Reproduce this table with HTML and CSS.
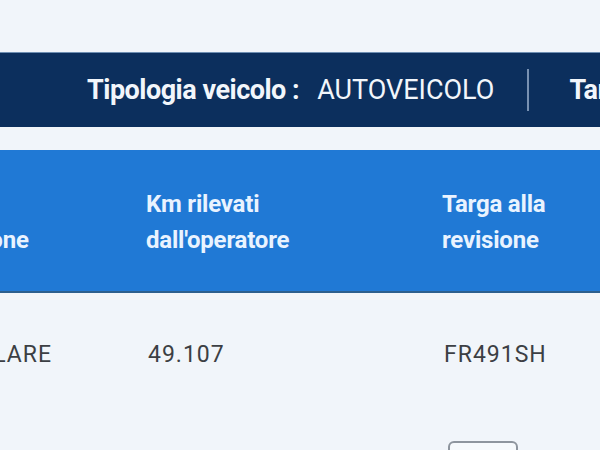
FILE: index.html
```html
<!DOCTYPE html>
<html lang="it">
<head>
<meta charset="utf-8">
<link rel="stylesheet" href="styles.css">
</head>
<body>
<div class="page">
  <div class="infobar">
    <span class="label">Tipologia veicolo :</span>
    <span class="value">AUTOVEICOLO</span>
    <span class="sep"></span>
    <span class="label">Targa :</span>
  </div>
  <div class="table">
    <div class="thead">
      <div class="th c1">Esito<br>revisione</div>
      <div class="th c2">Km rilevati<br>dall'operatore</div>
      <div class="th c3">Targa alla<br>revisione</div>
    </div>
    <div class="row">
      <div class="td c1">REGOLARE</div>
      <div class="td c2">49.107</div>
      <div class="td c3">FR491SH</div>
    </div>
    <div class="actions">
      <div class="c1"></div>
      <div class="c2"></div>
      <div class="c3"><span class="btn"></span></div>
    </div>
  </div>
</div>
</body>
</html>
```
FILE: styles.css
```css
html, body {
  margin: 0;
  padding: 0;
  width: 600px;
  height: 450px;
  overflow: hidden;
  background: #f1f5fa;
  font-family: Roboto, "Liberation Sans", sans-serif;
}
.page {
  padding-top: 52px;
}
.infobar {
  height: 74px;
  background: #0c2f5d;
  border-top: 1px solid #6f8fb3;
  display: flex;
  align-items: center;
  padding-left: 87px;
  white-space: nowrap;
  color: #f2f6fb;
  font-size: 27px;
  letter-spacing: -0.5px;
}
.infobar > span {
  flex: none;
}
.label {
  font-weight: 700;
}
.value {
  font-weight: 400;
  font-size: 27px;
  margin-left: 18px;
  letter-spacing: 0;
}
.sep {
  display: block;
  width: 2px;
  height: 42px;
  background: #7891b2;
  margin: 0 40px 0 33px;
}
.table {
  margin-top: 23px;
  margin-left: -120px;
}
.thead {
  display: flex;
  height: 143px;
  align-items: center;
  background: #2079d5;
  border-bottom: 2px solid #2c5f8e;
  color: #e9f3ff;
  font-weight: 700;
  font-size: 24px;
  line-height: 36px;
  letter-spacing: -0.2px;
  padding-top: 2px;
  box-sizing: border-box;
}
.c1 { width: 266px; flex: none; box-sizing: border-box; }
.c2 { width: 296px; flex: none; }
.c3 { width: 200px; flex: none; }
.thead .c1 { padding-left: 52px; }
.row {
  display: flex;
  height: 122px;
  align-items: center;
  color: #3c3f44;
  font-size: 23px;
  letter-spacing: 1px;
}
.row .c1 { text-align: right; padding-right: 94px; }
.row .c2 { padding-left: 2px; box-sizing: border-box; }
.row .c3 { padding-left: 2px; box-sizing: border-box; }
.actions {
  display: flex;
  margin-top: 26px;
}
.btn {
  display: block;
  width: 66px;
  height: 32px;
  margin-left: 6px;
  border: 2px solid #8e959e;
  border-radius: 6px;
  background: #f6f9fc;
}
```
